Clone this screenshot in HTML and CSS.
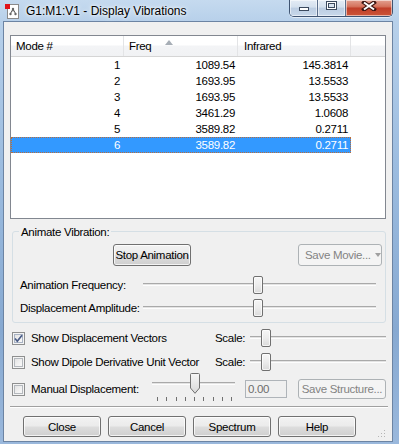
FILE: index.html
```html
<!DOCTYPE html>
<html lang="en">
<head>
    <meta charset="UTF-8">
    <title>G1:M1:V1 - Display Vibrations</title>
    <link rel="stylesheet" href="styles.css">
</head>
<body>

    <!-- ===== WINDOW FRAME ===== -->
    <div class="window">
        <div class="titlebar">
            <svg class="app-icon" width="16" height="16" viewBox="0 0 16 16">
                <rect x="3.5" y="1.5" width="11" height="14" fill="#fff" stroke="#8a8a8a"/>
                <path d="M9 6 L6.5 10.5 M9 6 L11.5 10.5 M9 6 V8.5" stroke="#555" stroke-width="1" fill="none"/>
                <circle cx="9" cy="6" r="1.2" fill="#666"/>
                <circle cx="6.5" cy="11" r="1.2" fill="#666"/>
                <circle cx="11.5" cy="11" r="1.2" fill="#666"/>
                <rect x="1" y="1" width="5" height="5" fill="#e0141a"/>
            </svg>
            <span class="title">G1:M1:V1 - Display Vibrations</span>
            <div class="caption-buttons">
                <div class="cap cap-min">
                    <svg width="12" height="6" viewBox="0 0 12 6"><rect x="1.5" y="1.5" width="9" height="3" fill="#fff" stroke="#3c4a5e"/></svg>
                </div>
                <div class="cap cap-max">
                    <svg width="11" height="9" viewBox="0 0 11 9"><rect x="1.5" y="1.5" width="8" height="6" fill="none" stroke="#3c4a5e" stroke-width="3"/><rect x="1.5" y="1.5" width="8" height="6" fill="none" stroke="#fff" stroke-width="1"/></svg>
                </div>
                <div class="cap cap-close">
                    <svg width="16" height="10" viewBox="0 0 16 10"><path d="M3 1.5 L13 8.5 M13 1.5 L3 8.5" stroke="#3b1410" stroke-width="4" stroke-linecap="square"/><path d="M3 1.5 L13 8.5 M13 1.5 L3 8.5" stroke="#fff" stroke-width="2"/></svg>
                </div>
            </div>
        </div>

        <!-- ===== DIALOG CONTENT ===== -->
        <div class="client">

            <div class="listview">
                <div class="lv-header">
                    <div class="hd col-mode">Mode #</div>
                    <div class="hd col-freq">Freq <span class="sort-arrow"></span></div>
                    <div class="hd col-ir">Infrared</div>
                    <div class="hd col-rest"></div>
                </div>
                <div class="lv-row"><span class="cell col-mode">1</span><span class="cell col-freq">1089.54</span><span class="cell col-ir">145.3814</span></div>
                <div class="lv-row"><span class="cell col-mode">2</span><span class="cell col-freq">1693.95</span><span class="cell col-ir">13.5533</span></div>
                <div class="lv-row"><span class="cell col-mode">3</span><span class="cell col-freq">1693.95</span><span class="cell col-ir">13.5533</span></div>
                <div class="lv-row"><span class="cell col-mode">4</span><span class="cell col-freq">3461.29</span><span class="cell col-ir">1.0608</span></div>
                <div class="lv-row"><span class="cell col-mode">5</span><span class="cell col-freq">3589.82</span><span class="cell col-ir">0.2711</span></div>
                <div class="lv-row selected"><span class="cell col-mode">6</span><span class="cell col-freq">3589.82</span><span class="cell col-ir">0.2711</span></div>
            </div>

            <div class="group">
                <span class="legend">Animate Vibration:</span>
                <div class="anim-buttons">
                    <button class="btn btn-stop">Stop Animation</button>
                    <button class="btn btn-movie" disabled>Save Movie...<span class="drop-arrow"></span></button>
                </div>
                <div class="slider-row row-freq">
                    <span class="slider-label">Animation Frequency:</span>
                    <div class="slider slider-wide">
                        <div class="track"></div>
                        <div class="thumb" style="left: 110px"></div>
                    </div>
                </div>
                <div class="slider-row row-amp">
                    <span class="slider-label">Displacement Amplitude:</span>
                    <div class="slider slider-wide">
                        <div class="track"></div>
                        <div class="thumb" style="left: 110px"></div>
                    </div>
                </div>
            </div>

            <div class="check-row">
                <span class="checkbox checked">
                    <svg width="9" height="9" viewBox="0 0 9 9"><path d="M1 4.5 L3.3 7.2 L8 1.2" stroke="#4a5c86" stroke-width="1.7" fill="none"/></svg>
                </span>
                <span class="check-label">Show Displacement Vectors</span>
                <span class="scale-label">Scale:</span>
                <div class="slider slider-scale">
                    <div class="track"></div>
                    <div class="thumb" style="left: 11px"></div>
                </div>
            </div>
            <div class="check-row">
                <span class="checkbox"></span>
                <span class="check-label">Show Dipole Derivative Unit Vector</span>
                <span class="scale-label">Scale:</span>
                <div class="slider slider-scale">
                    <div class="track"></div>
                    <div class="thumb" style="left: 11px"></div>
                </div>
            </div>
            <div class="check-row row-manual">
                <span class="checkbox"></span>
                <span class="manual-label">Manual Displacement:</span>
                <div class="slider slider-manual">
                    <div class="track"></div>
                    <svg class="pointer" style="left: 40px" width="10" height="21" viewBox="0 0 10 21">
                        <defs>
                            <linearGradient id="ptr" x1="0" y1="0" x2="0" y2="1">
                                <stop offset="0" stop-color="#f6f6f6"/>
                                <stop offset="1" stop-color="#d8d8d8"/>
                            </linearGradient>
                        </defs>
                        <path d="M0.5 1.5 Q0.5 0.5 1.5 0.5 H8.5 Q9.5 0.5 9.5 1.5 V15 L5 20.3 L0.5 15 Z" fill="url(#ptr)" stroke="#707070"/>
                    </svg>
                    <div class="ticks">
                        <span></span><span></span><span></span><span></span><span></span><span></span><span></span><span></span><span></span>
                    </div>
                </div>
                <span class="textbox">0.00</span>
                <button class="btn btn-structure" disabled>Save Structure...</button>
            </div>

            <div class="separator"></div>

            <div class="dialog-buttons">
                <button class="btn btn-dialog">Close</button>
                <button class="btn btn-dialog">Cancel</button>
                <button class="btn btn-dialog">Spectrum</button>
                <button class="btn btn-dialog">Help</button>
                <svg class="size-grip" width="9" height="9" viewBox="0 0 9 9">
                    <g fill="#b5b5b5">
                        <rect x="7" y="1" width="1" height="1"/>
                        <rect x="4" y="4" width="1" height="1"/><rect x="7" y="4" width="1" height="1"/>
                        <rect x="1" y="7" width="1" height="1"/><rect x="4" y="7" width="1" height="1"/><rect x="7" y="7" width="1" height="1"/>
                    </g>
                </svg>
            </div>
        </div>
    </div>

</body>
</html>
```

FILE: styles.css
```css
/* General Reset and Base */
* { box-sizing: border-box; margin: 0; padding: 0; }
html, body { width: 399px; height: 444px; overflow: hidden; }
body {
    font-family: "Liberation Sans", Arial, sans-serif;
    font-size: 11.5px; letter-spacing: -0.3px; color: #000;
    background: #8eaed3;
}

/* --- Window frame --- */
.window {
    width: 399px; height: 444px;
    display: flex; flex-direction: column;
    padding: 0 6px 2px 3px;
    background: linear-gradient(180deg, #c5daef 0, #b7d0ea 22px, #9dbde0 160px, #87a9d1 330px, #9ab8dc 444px);
}
.titlebar {
    height: 21px; display: flex; align-items: flex-start;
    position: relative;
}
.app-icon { margin: 3px 0 0 1px; flex: none; }
.title {
    margin: 3px 0 0 6px; font-size: 12px; letter-spacing: 0; line-height: 16px;
    text-shadow: 0 0 6px #fff, 0 0 3px #fff;
}
.caption-buttons {
    margin-left: auto; display: flex; height: 17px;
    border: 1px solid #3f5472; border-top: none;
    border-radius: 0 0 5px 5px; overflow: hidden;
    box-shadow: 0 1px 0 rgba(255,255,255,0.6);
}
.cap {
    height: 16px; display: flex; justify-content: center; align-items: flex-start;
    box-shadow: inset 0 0 0 1px rgba(255,255,255,0.55);
}
.cap-min, .cap-max {
    width: 28px;
    background: linear-gradient(180deg, #e4ecf5 0, #d4e0ee 45%, #bccde2 50%, #c8d8ea 100%);
    border-right: 1px solid #5b6f8c;
}
.cap-min svg { margin-top: 6px; }
.cap-max svg { margin-top: 1px; }
.cap-close {
    width: 46px;
    background: linear-gradient(180deg, #e3a191 0, #d5745e 40%, #c1402a 52%, #cc5537 100%);
}
.cap-close svg { margin-top: 1px; }

.client {
    flex: 1; background: #f0f0f0;
    border: 1px solid #6c84a3;
    display: flex; flex-direction: column;
}

/* --- List view --- */
.listview {
    margin: 13px 6px 0 6px; height: 184px;
    border: 1px solid #828790; background: #fff;
}
.lv-header {
    display: flex; height: 21px;
    border-bottom: 1px solid #d5d5d5;
    background: linear-gradient(180deg, #ffffff 0, #ffffff 45%, #f3f4f6 50%, #f1f2f4 100%);
}
.hd {
    height: 20px; line-height: 20px; padding-left: 5px;
    border-right: 1px solid #e3e4e6;
    display: flex; align-items: center;
}
.col-mode { width: 113px; }
.col-freq { width: 114px; }
.col-ir { width: 113px; }
.hd.col-rest { flex: 1; border-right: none; }
.hd.col-ir { padding-left: 6px; }
.sort-arrow {
    margin: -8px 0 0 14px;
    border-left: 4.5px solid transparent; border-right: 4.5px solid transparent;
    border-bottom: 5px solid #a7aeb6;
}
.lv-row { display: flex; height: 16px; line-height: 16px; }
.cell { text-align: right; padding-right: 4px; }
.cell.col-freq, .cell.col-ir { padding-right: 3px; }
.lv-row.selected .cell { background: #3399ff; color: #fff; }
.lv-row.selected {
    width: 340px;
    outline: 1px dotted #b86d3c; outline-offset: -1px;
}

/* --- Animate group --- */
.group {
    margin: 12px 6px 0 8px; height: 92px;
    border: 1px solid #d5dfe5; border-radius: 3px;
}
.legend {
    display: inline-block; margin: -6px 0 0 6px; padding: 0 2px;
    line-height: 13px; background: #f0f0f0;
    vertical-align: top;
}
.anim-buttons {
    display: flex; justify-content: space-between;
    padding: 0 3px 0 100px; margin-top: 0;
}
.btn {
    font: inherit; color: #000; letter-spacing: inherit; white-space: nowrap;
    border: 1px solid #707070; border-radius: 3px;
    background: linear-gradient(180deg, #f2f2f2 0, #ebebeb 48%, #dddddd 52%, #cfcfcf 100%);
    box-shadow: inset 0 0 0 1px rgba(255,255,255,0.75);
}
.btn:disabled {
    color: #838383; border-color: #adb2b5;
    background: #f4f4f4; box-shadow: none;
}
.btn-stop { width: 78px; height: 22px; }
.btn-movie {
    width: 84px; height: 22px;
    display: flex; align-items: center; padding-left: 6px;
}
.drop-arrow {
    margin-left: 4px;
    border-left: 3.5px solid transparent; border-right: 3.5px solid transparent;
    border-top: 4px solid #a0a0a0;
}

.slider-row { display: flex; height: 18px; align-items: center; padding-left: 7px; }
.row-freq { margin-top: 10px; }
.row-amp { margin-top: 5px; }
.slider-label { width: 123px; }

/* --- Track bars --- */
.slider { position: relative; height: 18px; flex: none; }
.slider-wide { width: 233px; }
.slider-scale { width: 136px; }
.track {
    position: absolute; left: 0; right: 0; top: 7px; height: 3px;
    border-top: 1px solid #a9a9a9; border-bottom: 1px solid #fdfdfd;
    background: #e3e3e3;
}
.thumb {
    position: absolute; top: 0; width: 10px; height: 18px;
    border: 1px solid #707070; border-radius: 2px;
    background: linear-gradient(180deg, #f6f6f6 0, #ececec 50%, #dadada 100%);
    box-shadow: inset 0 0 0 1px rgba(255,255,255,0.7);
}

/* --- Check rows --- */
.check-row { display: flex; align-items: center; height: 18px; margin: 6px 0 0 8px; }
.checkbox {
    width: 13px; height: 13px; flex: none; margin-right: 6px;
    border: 1px solid #8e8f8f;
    background: linear-gradient(135deg, #dcdcdc 0, #f3f3f3 60%, #fbfbfb 100%);
    box-shadow: inset 0 0 0 1px #f4f4f4, inset 0 0 0 2px #b4b8bd;
    display: flex; align-items: center; justify-content: center;
}
.checkbox.checked { box-shadow: inset 0 0 0 1px #f4f4f4, inset 0 0 0 2px #a9b3c4; }
.check-label { width: 184px; white-space: nowrap; }
.scale-label { width: 35px; }

.row-manual { height: 20px; margin-top: 8px; }
.manual-label { width: 119px; white-space: nowrap; }
.slider-manual { width: 87px; height: 28px; align-self: flex-start; margin-top: -6px; }
.slider-manual .track { left: 2px; right: 2px; top: 9px; }
.pointer { position: absolute; top: 0; }
.ticks {
    position: absolute; left: 7px; top: 24px;
    display: flex; gap: 8.3px;
}
.ticks span { width: 1px; height: 4px; background: #707070; }
.textbox {
    margin-left: 8px; width: 42px; height: 18px; line-height: 16px;
    border: 1px solid #afb4b9; background: #f0f0f0;
    color: #6d6d6d; padding-left: 2px;
}
.btn-structure { margin-left: 11px; width: 88px; height: 20px; }

.separator {
    margin: 7px 4px 0 6px; height: 2px;
    border-top: 1px solid #a0a0a0; border-bottom: 1px solid #ffffff;
}

/* --- Bottom buttons --- */
.dialog-buttons { display: flex; gap: 7px; margin: 8px 0 0 19px; height: 21px; }
.btn-dialog { width: 78px; height: 21px; }
.size-grip { margin: auto 6px 0 auto; align-self: flex-end; position: relative; top: 1px; }
```
